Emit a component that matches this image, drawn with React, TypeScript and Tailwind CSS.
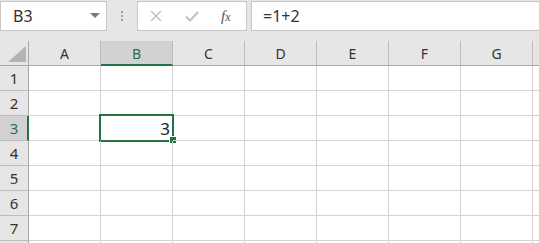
import React from 'react'

const cols = ['A', 'B', 'C', 'D', 'E', 'F', 'G', 'H']
const rows = [1, 2, 3, 4, 5, 6, 7, 8]

function App() {
  return (
    <div className="w-[539px] h-[243px] overflow-hidden bg-[#e6e6e6] font-['Noto_Sans','Liberation_Sans',sans-serif] text-[#222]">
      {/* Formula bar */}
      <div className="flex h-[41px] items-start pt-[1px]">
        <div className="flex h-[30px] w-[107px] shrink-0 items-center justify-between border border-[#c6c6c6] bg-white pl-[12px] pr-[6px]">
          <span className="text-[16px] leading-none text-[#333]">B3</span>
          <svg width="10" height="6" viewBox="0 0 10 6">
            <path d="M0 0 H10 L5 5 Z" fill="#7a7a7a" />
          </svg>
        </div>
        <div className="flex h-[30px] w-[30px] shrink-0 flex-col items-center justify-center gap-[2px]">
          <span className="h-[2px] w-[2px] bg-[#a0a0a0]" />
          <span className="h-[2px] w-[2px] bg-[#a0a0a0]" />
          <span className="h-[2px] w-[2px] bg-[#a0a0a0]" />
        </div>
        <div className="flex h-[30px] w-[110px] shrink-0 items-center border border-[#c6c6c6] bg-white">
          <svg width="12" height="12" viewBox="0 0 12 12" className="ml-[12px]">
            <path d="M1 1 L11 11 M11 1 L1 11" stroke="#c0c0c0" strokeWidth="1.4" />
          </svg>
          <svg width="14" height="11" viewBox="0 0 14 11" className="ml-[23px]">
            <path d="M1 5.5 L5 9.5 L13 1" stroke="#c0c0c0" strokeWidth="2" fill="none" />
          </svg>
          <span className="ml-[22px] font-['Liberation_Serif',serif] text-[15px] italic leading-none text-[#555]">
            f<span className="text-[12px]">x</span>
          </span>
        </div>
        <div className="ml-[4px] flex h-[30px] flex-1 items-center border-y border-l border-[#c6c6c6] bg-white pl-[11px]">
          <span className="text-[16px] leading-none text-[#333]">=1+2</span>
        </div>
      </div>

      {/* Column headers */}
      <div className="flex h-[25px]">
        <div className="flex h-[25px] w-[29px] shrink-0 items-end justify-end border-r border-b border-[#a8a8a8] pb-[3px] pr-[2px]">
          <svg width="18" height="16" viewBox="0 0 18 16">
            <path d="M18 0 V16 H0 Z" fill="#b4b4b4" />
          </svg>
        </div>
        {cols.map((c) => (
          <div
            key={c}
            className={
              c === 'B'
                ? 'flex h-[25px] w-[72px] shrink-0 items-center justify-center border-r border-r-[#bcbcbc] border-b-2 border-b-[#217346] bg-[#d2d2d2] pt-[1px] text-[14px] text-[#217346]'
                : 'flex h-[25px] w-[72px] shrink-0 items-center justify-center border-r border-r-[#bcbcbc] border-b border-b-[#a8a8a8] text-[14px] text-[#333]'
            }
          >
            {c === 'H' ? '' : c}
          </div>
        ))}
      </div>

      {/* Rows */}
      {rows.map((r) => (
        <div key={r} className="flex h-[25px] bg-white">
          <div
            className={
              r === 3
                ? 'flex h-[25px] w-[29px] shrink-0 items-center justify-center border-r-2 border-r-[#217346] border-b border-b-[#bcbcbc] bg-[#d2d2d2] pl-[1px] text-[15px] text-[#217346]'
                : 'flex h-[25px] w-[29px] shrink-0 items-center justify-center border-r border-r-[#a8a8a8] border-b border-b-[#bcbcbc] bg-[#e6e6e6] text-[15px] text-[#333]'
            }
          >
            {r}
          </div>
          {cols.map((c) => (
            <div
              key={c}
              className="relative flex h-[25px] w-[72px] shrink-0 items-center justify-end border-r border-b border-[#d4d4d4]"
            >
              {r === 3 && c === 'B' && (
                <>
                  <span className="pr-[2px] text-[17px] leading-none text-[#222]">3</span>
                  <div className="absolute left-[-2px] top-[-2px] h-[28px] w-[75px] border-2 border-[#217346]" />
                  <div className="absolute left-[68px] top-[20px] h-[8px] w-[8px] border border-white bg-[#217346]" />
                </>
              )}
            </div>
          ))}
        </div>
      ))}
    </div>
  )
}

export default App
